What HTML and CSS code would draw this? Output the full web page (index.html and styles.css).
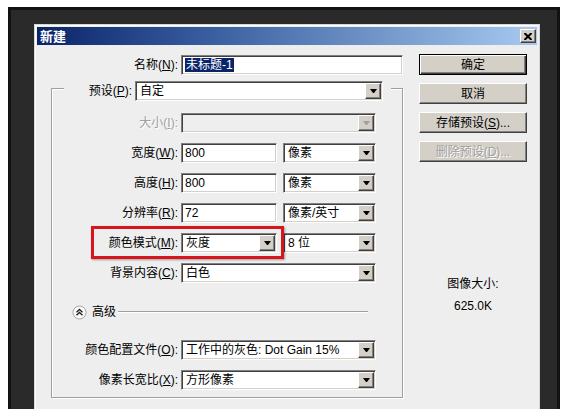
FILE: index.html
```html
<!DOCTYPE html>
<html lang="zh-CN">
<head>
<meta charset="utf-8">
<title>新建</title>
<link rel="stylesheet" href="styles.css">
</head>
<body>
<div class="frame">
  <div class="dialog">
    <div class="titlebar">
      <span class="title">新建</span>
      <span class="close"><svg width="8" height="7" viewBox="0 0 8 7"><path d="M0.5 0 L7.5 7 M7.5 0 L0.5 7" stroke="#000" stroke-width="2"/></svg></span>
    </div>
    <div class="content">
      <div class="left">
        <div class="row name-row">
          <label class="lbl lbl-outer">名称(<u>N</u>):</label>
          <div class="field w-name"><span class="sel-text">未标题-1</span></div>
        </div>
        <div class="group">
          <div class="legend">
            <label class="lbl-legend">预设(<u>P</u>):</label>
            <div class="combo w-preset"><span class="val">自定</span><span class="drop"></span></div>
          </div>
          <div class="row first">
            <label class="lbl disabled">大小(<u>I</u>):</label>
            <div class="combo w-full is-disabled"><span class="val"></span><span class="drop"></span></div>
          </div>
          <div class="row">
            <label class="lbl">宽度(<u>W</u>):</label>
            <div class="field w-num">800</div>
            <div class="combo w-unit"><span class="val">像素</span><span class="drop"></span></div>
          </div>
          <div class="row">
            <label class="lbl">高度(<u>H</u>):</label>
            <div class="field w-num">800</div>
            <div class="combo w-unit"><span class="val">像素</span><span class="drop"></span></div>
          </div>
          <div class="row">
            <label class="lbl">分辨率(<u>R</u>):</label>
            <div class="field w-num">72</div>
            <div class="combo w-unit"><span class="val">像素/英寸</span><span class="drop"></span></div>
          </div>
          <div class="row">
            <label class="lbl">颜色模式(<u>M</u>):</label>
            <div class="combo w-num"><span class="val">灰度</span><span class="drop"></span></div>
            <div class="combo w-unit"><span class="val">8 位</span><span class="drop"></span></div>
            <div class="annot"></div>
          </div>
          <div class="row">
            <label class="lbl">背景内容(<u>C</u>):</label>
            <div class="combo w-full"><span class="val">白色</span><span class="drop"></span></div>
          </div>
          <div class="adv">
            <svg class="adv-icon" width="15" height="15" viewBox="0 0 15 15"><circle cx="7.5" cy="7.5" r="6.5" fill="#fafafa" stroke="#a8a8a8"/><path d="M4.5 7.2 L7.5 4.5 L10.5 7.2 M4.5 10.2 L7.5 7.5 L10.5 10.2" fill="none" stroke="#222" stroke-width="1.4"/></svg>
            <span class="adv-text">高级</span>
            <span class="adv-line"></span>
          </div>
          <div class="row profile">
            <label class="lbl">颜色配置文件(<u>O</u>):</label>
            <div class="combo w-full"><span class="val">工作中的灰色: Dot Gain 15%</span><span class="drop"></span></div>
          </div>
          <div class="row">
            <label class="lbl">像素长宽比(<u>X</u>):</label>
            <div class="combo w-full"><span class="val">方形像素</span><span class="drop"></span></div>
          </div>
        </div>
      </div>
      <div class="right">
        <div class="btn default">确定</div>
        <div class="btn">取消</div>
        <div class="btn">存储预设(<u>S</u>)...</div>
        <div class="btn is-disabled">删除预设(<u>D</u>)...</div>
        <div class="info">
          <div>图像大小:</div>
          <div class="size">625.0K</div>
        </div>
      </div>
    </div>
  </div>
</div>
</body>
</html>
```

FILE: styles.css
```css
* { box-sizing: border-box; }
html, body {
  margin: 0;
  padding: 0;
  height: 100%;
  overflow: hidden;
  background: #ffffff;
}
body {
  font-family: "Liberation Sans", "Noto Sans CJK SC", sans-serif;
  font-size: 12px;
  line-height: 14px;
  color: #000;
}
u { text-decoration: underline; text-underline-offset: 1px; }

.frame {
  margin: 7px 0 0 8px;
  width: 552px;
  height: 430px;
  background: #2a2a2a;
  border: 3px solid #121212;
  border-bottom: none;
  padding: 14px 0 0 23px;
}

.dialog {
  width: 506px;
  height: 420px;
  background: #eeeeee;
  border: 1px solid #d6d6d6;
  box-shadow: inset 1px 1px 0 #ffffff;
  padding: 2px;
}

.titlebar {
  height: 18px;
  background: linear-gradient(to right, #0a246a 0%, #3a5fa0 35%, #a6caf0 100%);
  display: flex;
  align-items: center;
  justify-content: space-between;
  padding: 0 1px 0 3px;
}
.title {
  color: #fff;
  font-family: "Noto Sans CJK SC", sans-serif;
  font-weight: bold;
  font-size: 13px;
  line-height: 16px;
}
.close {
  width: 16px;
  height: 14px;
  background: #d4d0c8;
  border: 1px solid;
  border-color: #fff #404040 #404040 #fff;
  box-shadow: inset -1px -1px 0 #808080;
  display: flex;
  align-items: center;
  justify-content: center;
}

.content {
  display: flex;
  gap: 16px;
  padding: 9px 10px 0 14px;
}

.left { width: 352px; }

.row {
  display: flex;
  align-items: center;
  height: 20px;
  margin-top: 10px;
  position: relative;
}
.name-row { margin-top: 1px; }
.row.first { margin-top: 12px; }
.row.profile { margin-top: 21px; }

.lbl {
  width: 126px;
  margin-right: 3px;
  text-align: right;
  white-space: nowrap;
}
.lbl-outer { width: 127px; }
.lbl.disabled { color: #a0a0a0; text-shadow: 1px 1px 0 #fff; }

.field, .combo {
  height: 20px;
  background: #fff;
  border: 1px solid;
  border-color: #808080 #ffffff #ffffff #808080;
  box-shadow: inset 1px 1px 0 #404040, inset -1px -1px 0 #d4d0c8;
  display: flex;
  align-items: center;
  white-space: nowrap;
}
.field { padding: 0 3px; }
.combo {
  justify-content: space-between;
  padding: 1px 1px 1px 4px;
}
.combo.is-disabled { background: #eeeeee; }

.drop {
  flex: none;
  width: 16px;
  height: 16px;
  background: #d4d0c8;
  border: 1px solid;
  border-color: #fff #404040 #404040 #fff;
  box-shadow: inset -1px -1px 0 #808080;
  display: flex;
  align-items: center;
  justify-content: center;
}
.drop::after {
  content: "";
  width: 1px;
  height: 0;
  border-left: 3px solid transparent;
  border-right: 3px solid transparent;
  border-top: 4px solid #000;
}
.is-disabled .drop::after { border-top-color: #a0a0a0; }

.w-name { width: 222px; }
.w-preset { width: 248px; }
.w-full { width: 195px; }
.w-num { width: 96px; }
.w-unit { width: 93px; margin-left: 6px; }

.sel-text {
  background: #0a246a;
  color: #fff;
  padding: 0 1px;
  line-height: 14px;
}

.group {
  margin-top: 13px;
  border: 1px solid #a0a0a0;
  box-shadow: inset 1px 1px 0 #fff, 1px 1px 0 #fff;
  padding: 0 0 7px 0;
}

.legend {
  display: flex;
  align-items: center;
  height: 20px;
  width: 327px;
  margin: -8px 0 0 12px;
  padding-right: 8px;
  background: #eeeeee;
}
.lbl-legend {
  width: 68px;
  margin-right: 3px;
  text-align: right;
  white-space: nowrap;
}

.annot {
  position: absolute;
  left: 39px;
  top: -7px;
  width: 193px;
  height: 33px;
  border: 3px solid #d8141c;
  box-shadow: 1px 1px 2px rgba(0, 0, 0, 0.35);
}

.adv {
  display: flex;
  align-items: center;
  height: 14px;
  margin: 22px 34px 0 20px;
}
.adv-icon { flex: none; }
.adv-text { margin-left: 5px; white-space: nowrap; }
.adv-line {
  flex: 1;
  margin-left: 2px;
  border-top: 1px solid #a0a0a0;
  border-bottom: 1px solid #ffffff;
}

.right {
  width: 108px;
  display: flex;
  flex-direction: column;
  gap: 8px;
}
.btn {
  height: 21px;
  background: #d4d0c8;
  border: 1px solid;
  border-color: #fff #404040 #404040 #fff;
  box-shadow: inset -1px -1px 0 #808080;
  display: flex;
  align-items: center;
  justify-content: center;
  white-space: nowrap;
}
.btn.default {
  border: 1px solid #000;
  box-shadow: inset 1px 1px 0 #fff, inset -1px -1px 0 #404040, inset -2px -2px 0 #808080;
}
.btn.is-disabled { color: #a0a0a0; text-shadow: 1px 1px 0 #fff; }

.info {
  margin-top: 107px;
  text-align: center;
}
.info .size { margin-top: 8px; }
```
